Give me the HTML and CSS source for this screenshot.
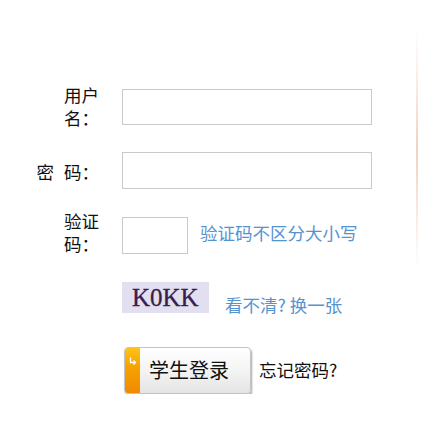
FILE: index.html
```html
<!DOCTYPE html>
<html lang="zh-CN">
<head>
<meta charset="utf-8">
<title>登录</title>
<link rel="stylesheet" href="styles.css">
</head>
<body>
<div class="page">
  <form class="login">
    <div class="row row-user">
      <label class="label">用户名：</label>
      <input class="field" type="text">
    </div>
    <div class="row row-pass">
      <label class="label">密<span class="gap"></span>码：</label>
      <input class="field" type="password">
    </div>
    <div class="row row-code">
      <label class="label">验证码：</label>
      <input class="field field-small" type="text">
      <span class="hint">验证码不区分大小写</span>
    </div>
    <div class="row row-captcha">
      <span class="captcha">K0KK</span>
      <a class="refresh">看不清? 换一张</a>
    </div>
    <div class="row row-submit">
      <button class="btn" type="button">
        <span class="btn-tab"><svg width="8" height="9" viewBox="0 0 8 9"><path d="M1.5 0.5 V5.5 H6.5 M4.5 3.5 L6.5 5.5 L4.5 7.5" fill="none" stroke="#fff" stroke-width="1.3"/></svg></span>
        <span class="btn-text">学生登录</span>
      </button>
      <a class="forgot">忘记密码?</a>
    </div>
  </form>
  <div class="divider"></div>
</div>
</body>
</html>
```

FILE: styles.css
```css
html, body {
  margin: 0;
  padding: 0;
  background: #ffffff;
}
body {
  font-family: "Noto Sans CJK SC", "Microsoft YaHei", sans-serif;
  font-size: 17.5px;
  line-height: 22.5px;
  color: #111;
}
.page {
  display: flex;
  align-items: flex-start;
}
.login {
  width: 383px;
  padding: 84px 0 0 34px;
  box-sizing: border-box;
}
.row {
  display: flex;
  align-items: center;
}
.label {
  width: 65px;
  flex: none;
  text-align: right;
  margin-right: 23px;
}
.gap {
  display: inline-block;
  width: 10px;
}
.field {
  box-sizing: border-box;
  width: 250px;
  height: 36px;
  border: 1px solid #c9c9c9;
  margin: 0;
  padding: 0 4px;
  background: #fff;
  font: inherit;
}
.row-pass {
  margin-top: 23px;
}
.row-pass .label {
  position: relative;
  top: 2px;
}
.row-pass .field {
  height: 37px;
}
.row-code {
  margin-top: 21px;
  align-items: flex-start;
}
.field-small {
  width: 66px;
  height: 37px;
  margin-top: 6.5px;
}
.hint {
  margin-left: 12px;
  margin-top: 12px;
  color: #5593cf;
}
.row-captcha {
  margin-top: 27px;
  padding-left: 88px;
  align-items: flex-start;
}
.captcha {
  width: 87px;
  height: 31px;
  box-sizing: border-box;
  padding-left: 10px;
  background: #e2dff0;
  font-family: "Liberation Serif", "Times New Roman", serif;
  font-weight: normal;
  font-size: 25px;
  line-height: 32px;
  color: #3a1c4e;
  -webkit-text-stroke: 0.3px #3a1c4e;
}
.refresh {
  margin-left: 16px;
  margin-top: 12px;
  color: #5593cf;
  cursor: pointer;
}
.row-submit {
  margin-top: 30px;
  padding-left: 90px;
}
.btn {
  display: flex;
  align-items: center;
  width: 127px;
  height: 47px;
  padding: 0;
  border: 1px solid #c4c4c4;
  border-radius: 4px;
  background: linear-gradient(#ffffff, #f4f4f4 50%, #e4e4e4);
  box-shadow: 1px 2px 2px rgba(0, 0, 0, 0.35);
  overflow: hidden;
  cursor: pointer;
  font: inherit;
}
.btn-tab {
  align-self: stretch;
  width: 15px;
  flex: none;
  background: linear-gradient(#ffc21a, #f7a300 40%, #f08a00);
  display: flex;
  justify-content: center;
  padding-top: 9px;
  box-sizing: border-box;
}
.btn-tab svg {
  display: block;
}
.btn-text {
  margin-left: 9px;
  font-size: 20px;
  line-height: 24px;
  color: #111;
}
.forgot {
  margin-left: 8px;
  color: #111;
  cursor: pointer;
}
.divider {
  width: 2px;
  height: 240px;
  margin-top: 30px;
  margin-left: 33px;
  background: linear-gradient(rgba(240, 200, 180, 0), rgba(238, 205, 185, 0.9) 50%, rgba(240, 200, 180, 0));
}
```
